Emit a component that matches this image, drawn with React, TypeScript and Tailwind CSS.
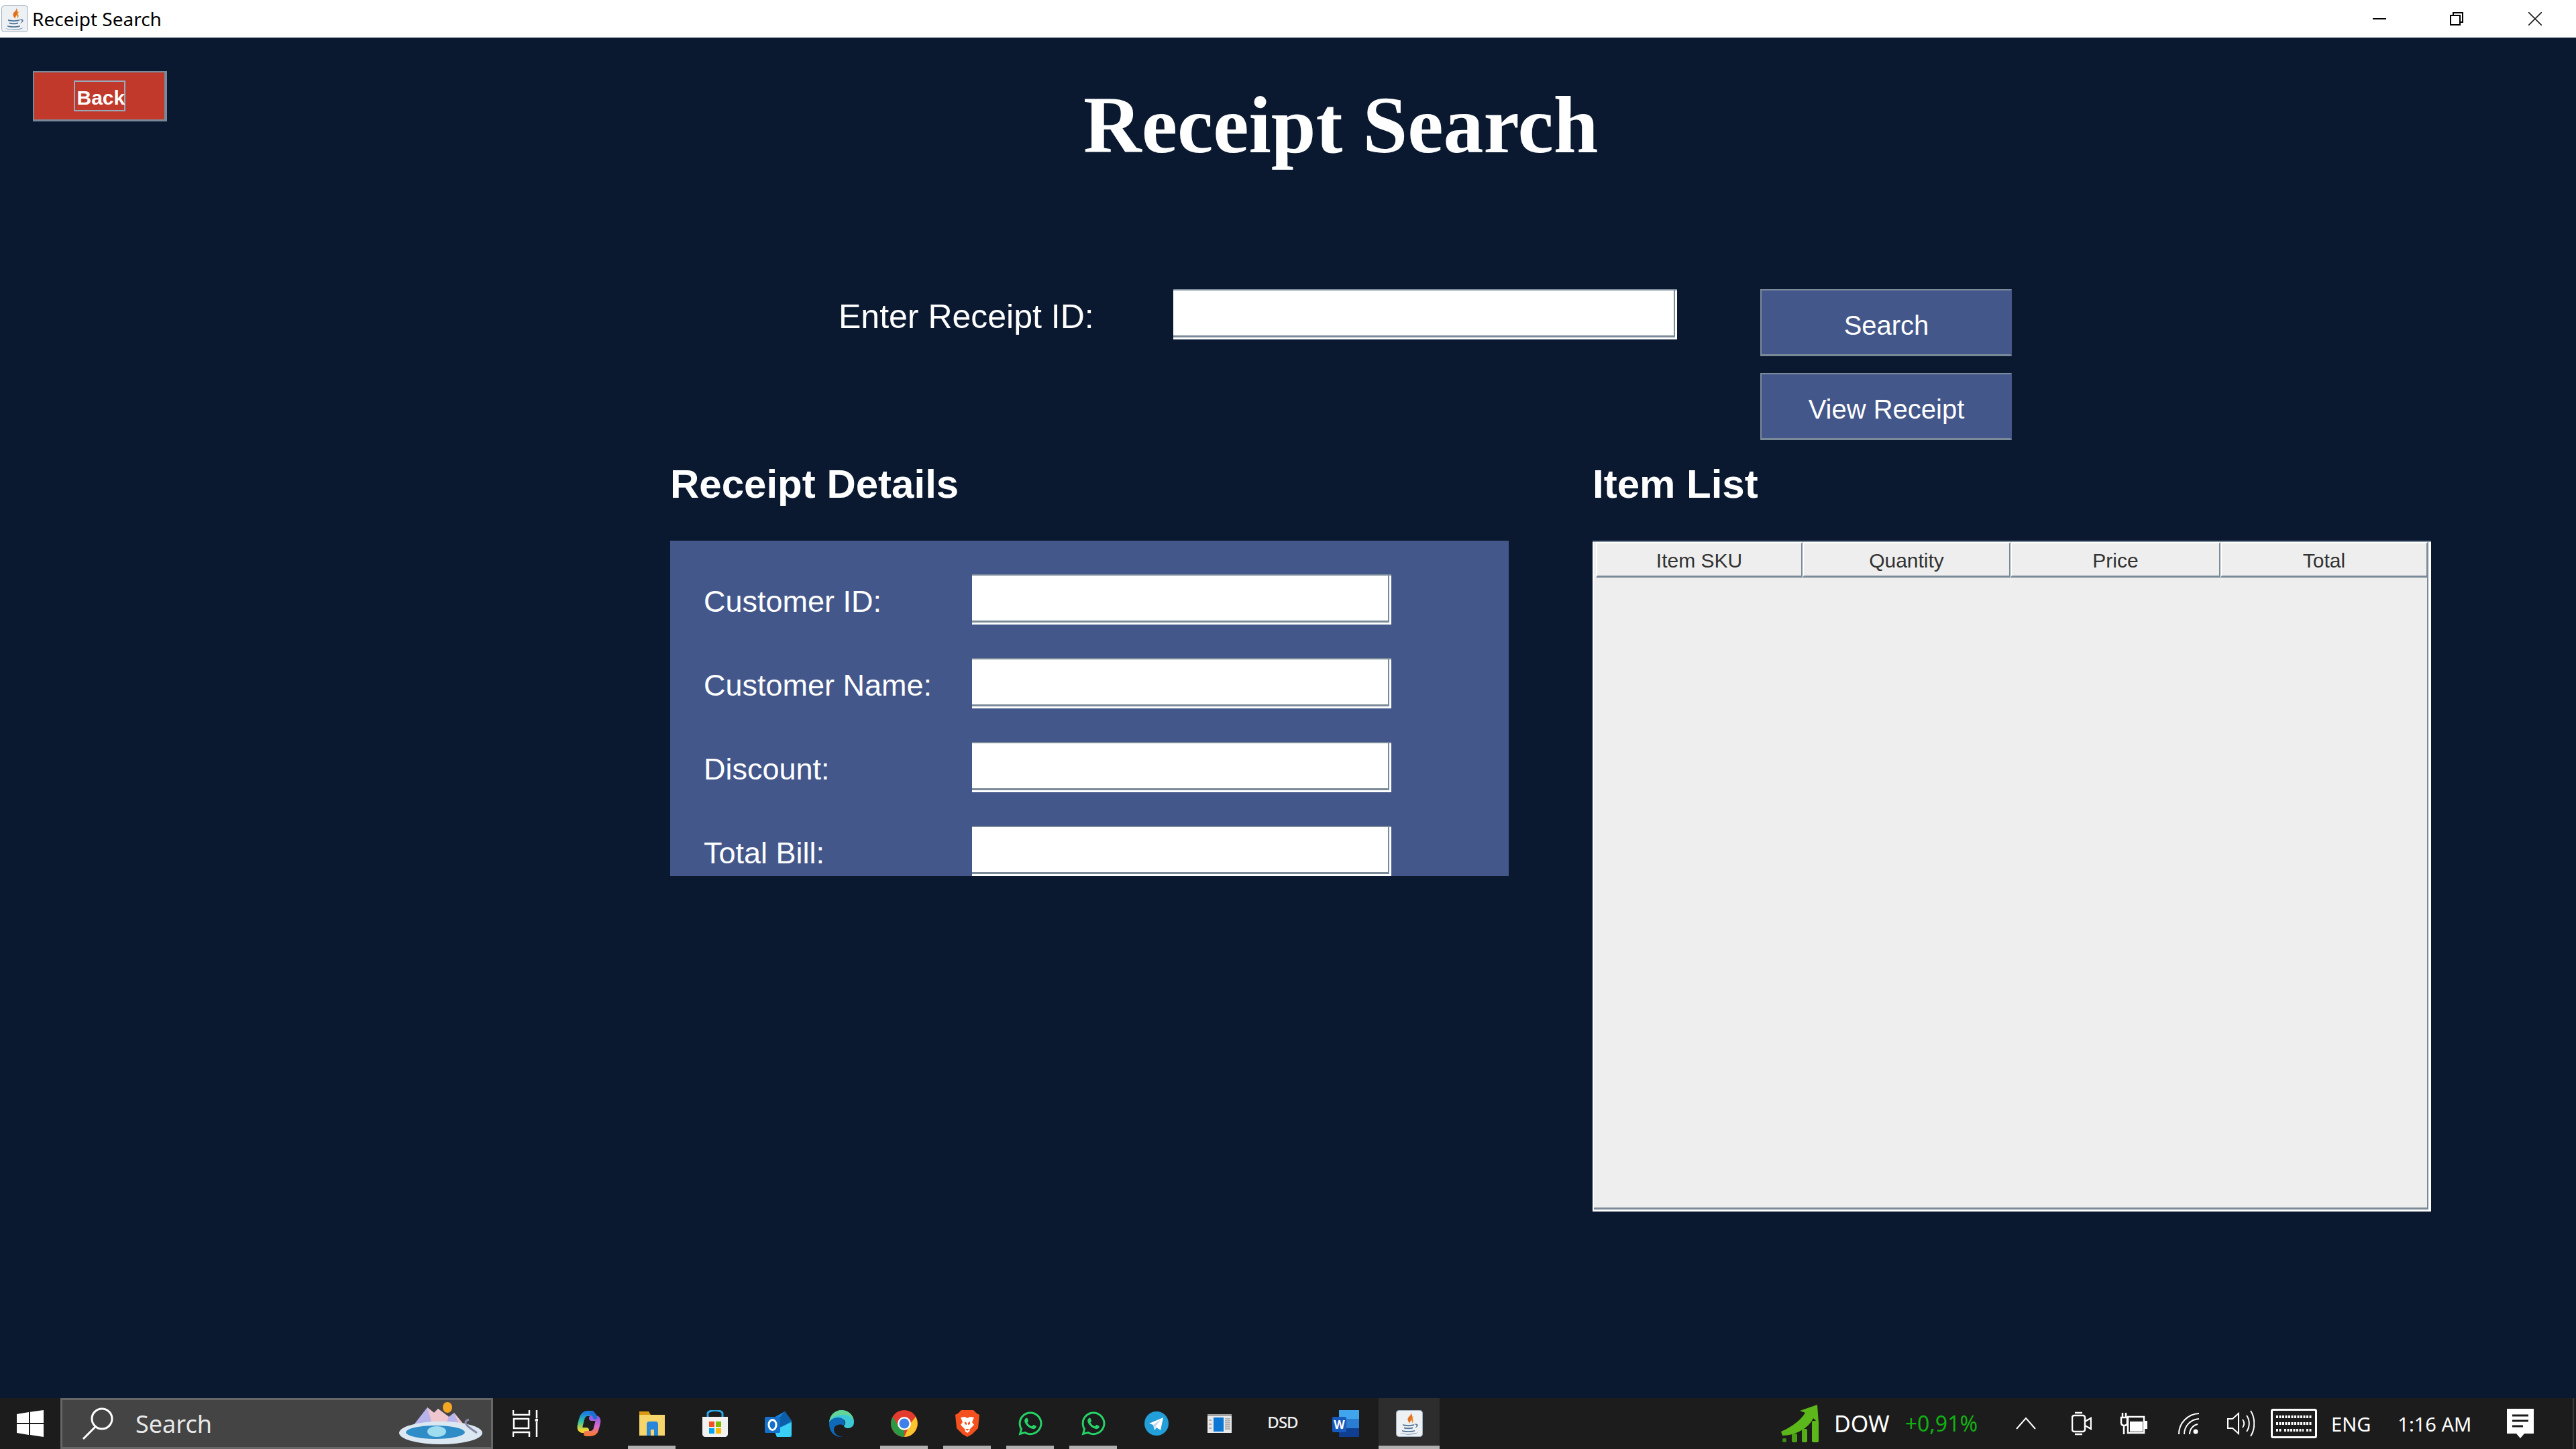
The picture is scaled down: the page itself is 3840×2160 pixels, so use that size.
import React from 'react';
import { FaWhatsapp } from 'react-icons/fa';

const sans = 'font-["Liberation_Sans",Arial,sans-serif]';

const Field = () => (
  <div className="w-full h-[75px] bg-white border-t-2 border-t-[#7a8a99] flex">
    <div className="flex-1 mr-[3px] mb-[3px] border-r-2 border-b-[3px] border-[#7a8a99] bg-white" />
  </div>
);

const ActionButton = ({ label }: { label: string }) => (
  <button className="w-[375px] h-[100px] bg-[#44578a] border-2 border-b-[3px] border-[#7a8a99] border-r-[#44578a] text-white text-[40px] pt-[8px] pl-[1px]">
    {label}
  </button>
);

const rows = ['Customer ID:', 'Customer Name:', 'Discount:', 'Total Bill:'];
const columns = ['Item SKU', 'Quantity', 'Price', 'Total'];

const JavaGlyph = ({ className }: { className: string }) => (
  <svg viewBox="0 0 40 40" className={className}>
    <rect x="0.5" y="0.5" width="39" height="39" rx="4" fill="#eef1f4" stroke="#9db0c0" />
    <path d="M22 3c3 5-7 7-4 13 .6 1.500 1.500 2.500 2.500 4-.5-4 6-7 3.500-11.500C23.500 6.500 23 4.500 22 3z" fill="#e2701f" />
    <path d="M27 9c-4 2-5 4-3.500 7.500.4 1 .7 2 .5 3 2.500-2.500 1.500-5 1-6.500-.3-1.200.7-2.700 2-4z" fill="#e8902a" />
    <path d="M10 21c4 1.500 13 1.500 17 0v2c-4 1.500-13 1.500-17 0zM12 25.500c3 1 10 1 13 0v2c-3 1-10 1-13 0zM9 30c4 1.500 15 1.500 19 0v1.500c-4 2-15 2-19 0z" fill="#55789a" />
    <path d="M27 21c3-1 6.500 0 5.500 2.500-.5 1.500-3 3-5.500 3.500 2-1 4-2.500 3.500-4-.3-1-1.500-1.500-3.500-2zM6 34c7 2.500 20 2.500 27-1-4 4.500-23 4.500-27 1z" fill="#55789a" />
  </svg>
);

const TaskIcon = ({ children, running }: { children: React.ReactNode; running?: boolean }) => (
  <div className="relative w-[94px] h-full flex items-center justify-center">
    {children}
    {running && <div className="absolute bottom-0 left-[11px] w-[71px] h-[5px] bg-[#b0b0b0]" />}
  </div>
);

export default function App() {
  return (
    <div className={`w-[3840px] h-[2160px] flex flex-col overflow-hidden bg-[#0a1930] ${sans}`}>
      {/* Title bar */}
      <div className="h-14 shrink-0 bg-white flex items-center">
        <JavaGlyph className="w-10 h-10 ml-[2px]" />
        <span className="ml-[6px] text-[28px] text-black font-['Noto_Sans',sans-serif]">Receipt Search</span>
        <div className="ml-auto flex items-center">
          <div className="w-5 h-[2px] bg-black" />
          <svg viewBox="0 0 20 20" className="w-5 h-5 ml-[95px]" fill="none" stroke="#000" strokeWidth="2">
            <rect x="1" y="5" width="14" height="14" />
            <path d="M5 5V1h14v14h-4" />
          </svg>
          <svg viewBox="0 0 20 20" className="w-5 h-5 ml-[97px] mr-[51px]" fill="none" stroke="#1a1a1a" strokeWidth="1.600">
            <path d="M0 0l20 20M20 0L0 20" />
          </svg>
        </div>
      </div>

      {/* Window content */}
      <div className="flex-1 flex flex-col">
        <div className="h-[375px] flex items-start">
          <button className="relative ml-[49px] mt-[50px] w-[200px] h-[75px] bg-[#c0392b] border-2 border-r-4 border-b-[3px] border-[#7a8a99] text-white text-[30px] font-bold">
            <span className="block mx-auto w-[77px] h-[46px] border-2 border-[#9aa9ba] pl-[3px] leading-[47px] text-center whitespace-nowrap">Back</span>
          </button>
          <h1 className="ml-[1366px] mt-[62px] text-[120px] leading-[138px] font-bold text-white whitespace-nowrap font-['Liberation_Serif','Times_New_Roman',serif]">
            Receipt Search
          </h1>
        </div>

        <div className="flex items-start">
          <label className="ml-[1250px] w-[499px] mt-[4px] text-[50px] leading-[75px] text-white">Enter Receipt ID:</label>
          <div className="w-[751px]">
            <Field />
          </div>
          <div className="ml-[124px] flex flex-col gap-[25px]">
            <ActionButton label="Search" />
            <ActionButton label="View Receipt" />
          </div>
        </div>

        <div className="ml-[999px] mt-[31px] flex gap-[125px]">
          <section className="w-[1250px]">
            <h2 className="h-[119px] text-[60px] leading-[69px] font-bold text-white">Receipt Details</h2>
            <div className="h-[500px] bg-[#44578a] pt-[50px] pl-[50px] flex flex-col gap-[50px] overflow-hidden">
              {rows.map((r) => (
                <div key={r} className="flex items-center h-[75px]">
                  <span className="w-[400px] mt-[6px] text-[45px] text-white">{r}</span>
                  <div className="w-[625px]">
                    <Field />
                  </div>
                </div>
              ))}
            </div>
          </section>

          <section className="w-[1250px]">
            <h2 className="h-[119px] text-[60px] leading-[69px] font-bold text-white">Item List</h2>
            <div className="h-[1000px] bg-white border-t-2 border-t-[#7a8a99] pl-[2px] pr-[4px] pb-[3px]">
              <div className="h-full bg-[#eeeeee] border-r-2 border-b-[3px] border-[#7a8a99] flex flex-col">
                <div className="grid grid-cols-[308px_310px_313px_309px] pl-[3px] h-[51px] shrink-0">
                  {columns.map((c) => (
                    <div key={c} className="bg-[#eeeeee] border-t-2 border-t-white border-l-2 border-l-white border-b-[3px] border-b-[#7a8a99] border-r-2 border-r-[#7a8a99] flex items-center justify-center pt-[3px] text-[30px] text-[#333333]">
                      {c}
                    </div>
                  ))}
                </div>
              </div>
            </div>
          </section>
        </div>
      </div>

      {/* Taskbar */}
      <div className="h-[76px] shrink-0 bg-[#1c1c1c] flex items-stretch font-['Noto_Sans',sans-serif] text-white">
        <div className="w-[90px] flex items-center justify-center">
          <svg viewBox="0 0 40 40" className="w-10 h-10" fill="#fff">
            <path d="M0 6l18-3v16H0zM20 2.700L40 0v19H20zM0 21h18v16L0 34zM20 21h20v19l-20-3z" />
          </svg>
        </div>
        <div className="w-[645px] bg-[#444444] border-[3px] border-[#666666] flex items-center relative">
          <svg viewBox="0 0 48 48" className="w-12 h-12 ml-[29px]" fill="none" stroke="#fff" strokeWidth="3">
            <circle cx="30" cy="17" r="15" />
            <path d="M20 29L2 47" />
          </svg>
          <span className="ml-[32px] mt-[2px] text-[36px] text-[#e8e8e8]">Search</span>
          <svg viewBox="0 0 132 64" className="w-[132px] h-[64px] absolute right-[5px] top-[3px]">
            <path d="M14 44L42 8l10 8 6-6 16 12 8-6 16 22 14 14z" fill="#b7b4ec" />
            <path d="M42 8l8 28 18 0 6-14-16-12-6 6zM82 16l10 24h10z" fill="#efc6cd" />
            <ellipse cx="72" cy="8" rx="7" ry="8" fill="#f5a623" />
            <ellipse cx="62" cy="46" rx="62" ry="17" fill="#dbe8f2" />
            <ellipse cx="54" cy="45" rx="44" ry="10" fill="#2e8cc7" />
            <ellipse cx="56" cy="44" rx="14" ry="8" fill="#9fdcf0" />
            <path d="M104 26c-12 4 0 12 12 20" fill="none" stroke="#8888a8" strokeWidth="3" />
          </svg>
        </div>

        <div className="w-[96px] flex items-center justify-center">
          <svg viewBox="0 0 38 40" className="w-[38px] h-10" fill="none" stroke="#fff" strokeWidth="2.500">
            <path d="M1 0v7h24V0M2 13h22v14H2zM1 40v-7h24v7M36 0v12M36 18v22" />
            <circle cx="36" cy="15" r="2.500" fill="#fff" stroke="none" />
          </svg>
        </div>
        <TaskIcon>
          <svg viewBox="0 0 40 40" className="w-10 h-10" fill="none" strokeLinecap="round">
            <defs>
              <linearGradient id="copilotLeft" x1="0" y1="0" x2="0" y2="1">
                <stop offset="0" stopColor="#1b7fe0" />
                <stop offset=".5" stopColor="#35c6a0" />
                <stop offset="1" stopColor="#f2d52f" />
              </linearGradient>
              <linearGradient id="copilotRight" x1="0" y1="0" x2="0" y2="1">
                <stop offset="0" stopColor="#9a5be0" />
                <stop offset=".55" stopColor="#d96ccf" />
                <stop offset="1" stopColor="#f5793f" />
              </linearGradient>
            </defs>
            <path d="M24 5h-6c-6 0-8 5-9 9l-2 8c-1 3-1 7 3 8h6" stroke="url(#copilotLeft)" strokeWidth="8" />
            <path d="M16 35h6c5 0 8-3 9-8l2-8c1-4 0-7-4-7h-5" stroke="url(#copilotRight)" strokeWidth="8" />
            <path d="M24 5c3 0 4 2 5 6" stroke="#1b6fd0" strokeWidth="6" />
          </svg>
        </TaskIcon>
        <TaskIcon running>
          <svg viewBox="0 0 38 40" className="w-[38px] h-10">
            <path d="M0 2h14l3 5H0z" fill="#d99a12" />
            <path d="M0 7h38v31H0z" fill="#f6d56a" />
            <path d="M11 38V21c0-3 2-4 4-4h9c3 0 4 2 4 4v17h-6v-9h-5v9z" fill="#2a86d8" />
          </svg>
        </TaskIcon>
        <TaskIcon>
          <svg viewBox="0 0 40 40" className="w-10 h-10">
            <path d="M9 12V5c0-6 22-6 22 0v7" fill="none" stroke="#2ba7e8" strokeWidth="3" />
            <path d="M1 10h38v26c0 2-2 4-4 4H5c-2 0-4-2-4-4z" fill="#f1f1f1" />
            <path d="M11 17h8v8h-8z" fill="#f25022" />
            <path d="M21 17h8v8h-8z" fill="#7fba00" />
            <path d="M11 27h8v8h-8z" fill="#00a4ef" />
            <path d="M21 27h8v8h-8z" fill="#ffb900" />
          </svg>
        </TaskIcon>
        <TaskIcon>
          <svg viewBox="0 0 40 40" className="w-10 h-10">
            <path d="M12 12L30 2l10 14v24H18z" fill="#1683d8" />
            <path d="M30 2l10 14-16 10-6-10z" fill="#0c5ea8" />
            <path d="M14 30l26-12v18c0 2-1 4-4 4H18z" fill="#3ad0f5" />
            <rect x="0" y="10" width="23" height="24" rx="2" fill="#1470c9" />
            <ellipse cx="11.500" cy="22" rx="5.500" ry="7.500" fill="none" stroke="#fff" strokeWidth="3" />
          </svg>
        </TaskIcon>
        <TaskIcon>
          <svg viewBox="0 0 40 40" className="w-10 h-10">
            <path d="M2 20C2 8 10 0 21 0c10 0 18 8 18 18 0 6-4 9-9 9-4 0-6-2-6-4 0 0 2-1 2-4 0-5-5-7-10-7C9 12 2 16 2 20z" fill="#3dc8d8" />
            <path d="M2 20C2 8 10 0 21 0c10 0 18 8 18 18 0-5-7-11-15-11C11 7 2 13 2 20z" fill="#7fdc6a" opacity=".6" />
            <path d="M2 20c0-5 6-9 14-9 5 0 9 3 9 8 0 3-2 4-2 4-2-3-14-2-14 6 0 6 6 11 15 11 3 0 6-1 8-2-3 2-7 2-12 2C9 40 2 32 2 20z" fill="#0e69b8" />
          </svg>
        </TaskIcon>
        <TaskIcon running>
          <svg viewBox="0 0 40 40" className="w-10 h-10">
            <circle cx="20" cy="20" r="20" fill="#e33b2e" />
            <path d="M20 20L3 30A20 20 0 0 0 20 40z" fill="#2c9a45" />
            <path d="M37 10A20 20 0 0 1 20 40l9-20z" fill="#f8c52c" />
            <path d="M3 30A20 20 0 0 1 3 10l9 15z" fill="#2c9a45" />
            <circle cx="20" cy="20" r="10" fill="#fff" />
            <circle cx="20" cy="20" r="7.500" fill="#3f7fe8" />
          </svg>
        </TaskIcon>
        <TaskIcon running>
          <svg viewBox="0 0 36 40" className="w-9 h-10">
            <path d="M9 0h18l5 5 4 2-2 20-9 9-7 4-7-4-9-9L0 7l4-2z" fill="#f4511e" />
            <path d="M8 11l6-1 4 2 4-2 6 1-3 7 3 4-6 6-1 4-3 2-3-2-1-4-6-6 3-4z" fill="#fff" />
            <path d="M14 17l3 2v3l-3-1zM22 17l-3 2v3l3-1zM15 28h6l-3 3z" fill="#f4511e" />
          </svg>
        </TaskIcon>
        <TaskIcon running>
          <FaWhatsapp className="w-10 h-10 text-[#25d366]" />
        </TaskIcon>
        <TaskIcon running>
          <FaWhatsapp className="w-10 h-10 text-[#25d366]" />
        </TaskIcon>
        <TaskIcon>
          <svg viewBox="0 0 36 36" className="w-9 h-9">
            <circle cx="18" cy="18" r="18" fill="#229ed9" />
            <path d="M28 9L7 18l6 2 2 8 3-4 6 4z" fill="#fff" />
            <path d="M13 20l11-8-7 10-1 5z" fill="#c8daea" />
          </svg>
        </TaskIcon>
        <TaskIcon>
          <svg viewBox="0 0 36 28" className="w-9 h-7">
            <rect width="36" height="28" fill="#e9e9e9" />
            <rect width="36" height="3" fill="#a0a0a0" />
            <rect x="9" y="5" width="15" height="21" fill="#0a78d4" />
            <path d="M26 7h8M26 10h8M26 13h8M26 16h8M26 19h8M26 22h8M2 9h4M2 15h4M2 21h4" stroke="#777" strokeWidth="1.200" />
          </svg>
        </TaskIcon>
        <TaskIcon>
          <span className="text-[24px] font-medium tracking-[-1px] mb-1 text-[#f0f0f0]">DSD</span>
        </TaskIcon>
        <TaskIcon>
          <svg viewBox="0 0 40 40" className="w-10 h-10">
            <rect x="10" width="30" height="40" rx="2" fill="#2b7cd3" />
            <rect x="10" width="30" height="13" fill="#41a5ee" />
            <rect x="10" y="13" width="30" height="14" fill="#2b7cd3" />
            <rect x="10" y="27" width="30" height="13" fill="#103f91" />
            <rect y="10" width="21" height="23" rx="2" fill="#185abd" />
            <text x="10.500" y="28" textAnchor="middle" fontSize="17" fontWeight="700" fill="#fff">W</text>
          </svg>
        </TaskIcon>
        <div className="relative w-[91px] ml-[2px] bg-[#2d2d2d] flex items-center justify-center">
          <JavaGlyph className="w-10 h-10" />
          <div className="absolute bottom-0 inset-x-0 h-[5px] bg-[#b0b0b0]" />
        </div>

        {/* Tray */}
        <div className="ml-[509px] flex items-center">
          <svg viewBox="0 0 56 56" className="w-14 h-14">
            <path d="M0 40C18 32 30 22 36 12l-8-3 26-9 2 28-8-8C42 34 22 46 2 46z" fill="#5cb81a" />
            <rect x="2" y="50" width="6" height="6" rx="2" fill="#3e8c12" />
            <rect x="16" y="43" width="8" height="13" rx="2" fill="#4a9e14" />
            <rect x="31" y="36" width="8" height="20" rx="2" fill="#55ad18" />
            <rect x="46" y="24" width="10" height="32" rx="2" fill="#5cb81a" />
          </svg>
          <span className="ml-[23px] text-[34px] leading-none">DOW</span>
          <span className="ml-[23px] text-[32px] leading-none text-[#12b012]">+0,91%</span>
          <svg viewBox="0 0 30 18" className="w-[30px] h-[18px] ml-[57px]" fill="none" stroke="#fff" strokeWidth="2">
            <path d="M1 17L15 1l14 16" />
          </svg>
          <svg viewBox="0 0 30 36" className="w-[30px] h-9 ml-[53px]" fill="none" stroke="#fff" strokeWidth="2.500">
            <rect x="1" y="6" width="19" height="24" rx="3" />
            <path d="M20 15l9-5v16l-9-5M5 2h11M5 34h11" />
          </svg>
          <svg viewBox="0 0 41 32" className="w-[41px] h-8 ml-[42px]" fill="none" stroke="#fff" strokeWidth="2.500">
            <path d="M4 0v7M9 0v7M2 7h9v8c0 3-2 4-4.500 4S2 18 2 15zM6 19v13" />
            <rect x="12" y="6" width="24" height="24" />
            <rect x="15" y="13" width="19" height="15" fill="#fff" stroke="none" />
            <path d="M39 12v12" strokeWidth="4" />
          </svg>
          <svg viewBox="0 0 32 32" className="w-8 h-8 ml-[46px]" fill="none" stroke="#fff" strokeWidth="2">
            <path d="M1 32C1 15 14 2 31 1M9 32C9 20 18 10 31 9M17 32c0-8 6-14 12-15" />
            <circle cx="26" cy="28" r="3.500" fill="#fff" stroke="none" />
          </svg>
          <svg viewBox="0 0 41 40" className="w-[41px] h-10 ml-[41px]" fill="none" stroke="#fff" strokeWidth="2">
            <path d="M1 13h7l9-8v30l-9-8H1zM23 14c3 4 3 8 0 12M29 8c5 7 5 17 0 24M35 1c7 11 7 27 0 38" />
          </svg>
          <svg viewBox="0 0 69 44" className="w-[69px] h-11 ml-[24px]" fill="none">
            <rect x="1.500" y="1.500" width="66" height="41" rx="2" stroke="#fff" strokeWidth="3" />
            <path d="M8 12h53M8 22h53M8 32h8M20 32h29M53 32h8" stroke="#fff" strokeWidth="4" strokeDasharray="3 1.500" />
          </svg>
          <span className="ml-[21px] text-[29px] leading-none">ENG</span>
          <span className="ml-[40px] text-[29px] leading-none whitespace-nowrap">1:16 AM</span>
          <svg viewBox="0 0 40 44" className="w-10 h-11 ml-[53px]">
            <path d="M0 0h40v37H26l-6 7-6-7H0z" fill="#fff" />
            <path d="M8 10h24M8 18h24M8 26h16" stroke="#1c1c1c" strokeWidth="3" />
          </svg>
        </div>
        <div className="ml-auto w-[2px] mr-[3px] bg-[#3a3a3a]" />
      </div>
    </div>
  );
}
